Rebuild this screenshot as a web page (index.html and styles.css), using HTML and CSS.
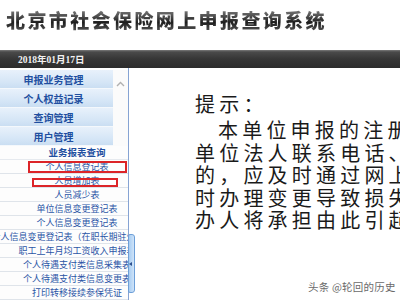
FILE: index.html
```html
<!DOCTYPE html>
<html lang="zh-CN">
<head>
<meta charset="utf-8">
<title>北京市社会保险网上申报查询系统</title>
<link rel="stylesheet" href="styles.css">
</head>
<body>
<div class="page">
  <header class="header">
    <h1 class="title">北京市社会保险网上申报查询系统</h1>
  </header>
  <div class="bar"><span class="date">2018年01月17日</span></div>
  <div class="main">
    <aside class="sidebar">
      <div class="top">
        <ul class="menu">
          <li class="menu-item">申报业务管理</li>
          <li class="menu-item">个人权益记录</li>
          <li class="menu-item">查询管理</li>
          <li class="menu-item">用户管理</li>
        </ul>
        <div class="gutter">
          <svg class="chev" width="9" height="6" viewBox="0 0 9 6"><polyline points="1,5 4.5,1.5 8,5" fill="none" stroke="#b0b0b0" stroke-width="1.4"/></svg>
        </div>
      </div>
      <ul class="sub">
        <li class="sub-item head">业务报表查询</li>
        <li class="sub-item">个人信息登记表</li>
        <li class="sub-item">人员增加表</li>
        <li class="sub-item">人员减少表</li>
        <li class="sub-item">单位信息变更登记表</li>
        <li class="sub-item">个人信息变更登记表</li>
        <li class="sub-item">个人信息变更登记表（在职长期驻外人员）</li>
        <li class="sub-item">职工上年月均工资收入申报表</li>
        <li class="sub-item">个人待遇支付类信息采集表</li>
        <li class="sub-item">个人待遇支付类信息变更表</li>
        <li class="sub-item">打印转移接续参保凭证</li>
      </ul>
      <span class="mark mark-1"></span>
      <span class="mark mark-2"></span>
    </aside>
    <span class="thumb"><span class="thumb-arrow"></span></span>
    <section class="content">
      <p class="tip-title">提示：</p>
      <p class="tip">
        <span class="line indent">本单位申报的注册信息发生变化的</span>
        <span class="line">单位法人联系电话、经办人联系</span>
        <span class="line">的，应及时通过网上申报系统进</span>
        <span class="line">时办理变更导致损失的，由单位</span>
        <span class="line">办人将承担由此引起的一切后果</span>
      </p>
    </section>
  </div>
  <div class="watermark">头条 @轮回的历史</div>
</div>
</body>
</html>
```

FILE: styles.css
```css
* { box-sizing: border-box; margin: 0; padding: 0; }
html, body { width: 400px; height: 300px; overflow: hidden; background: #fff; }
body { font-family: "Noto Sans CJK SC", "Noto Sans", sans-serif; }
ul { list-style: none; }

.page { position: relative; width: 400px; height: 300px; overflow: hidden; }

.header { height: 50px; padding: 8px 0 0 6px; background: #fff; }
.title {
  font-size: 19px;
  font-weight: 900;
  letter-spacing: 2.4px;
  line-height: 24px;
  white-space: nowrap;
  background: linear-gradient(#8a8a8a 0%, #3a3a3a 45%, #1e1e1e 60%, #5a5a5a 100%);
  -webkit-background-clip: text;
  background-clip: text;
  color: transparent;
}

.bar {
  height: 18px;
  display: flex;
  align-items: center;
  padding-left: 18px;
  background: linear-gradient(#7a7a7a 0, #4a4a4a 2px, #363636 50%, #2c2c2c 100%);
}
.date {
  color: #f2f2f2;
  font-family: "Liberation Serif", "Noto Sans CJK SC", serif;
  font-weight: bold;
  font-size: 9.5px;
}

.main { display: flex; height: 232px; }

.sidebar {
  position: relative;
  width: 129px;
  flex: none;
  border-right: 1px solid #86a3d3;
  padding-top: 2px;
  overflow: hidden;
}
.top { display: flex; }
.menu { width: 113px; }
.menu-item {
  height: 19px;
  display: flex;
  align-items: center;
  justify-content: center;
  padding-right: 6px;
  background: linear-gradient(#e8f1fb, #d4e5f6 70%, #cadef2);
  border-bottom: 1px solid #f4f8fc;
  color: #1f4fa0;
  font-size: 10px;
  font-weight: bold;
  white-space: nowrap;
}
.gutter { flex: 1; display: flex; justify-content: center; padding-top: 11px; background: #fbfbfb; }

.sub { background: #fdfdfd; }
.sub-item {
  height: 14px;
  display: flex;
  align-items: center;
  justify-content: center;
  padding-left: 26px;
  border-bottom: 1px solid #dfe4ea;
  color: #2b55a6;
  font-size: 9px;
  line-height: 13px;
  white-space: nowrap;
}
.sub-item.head { font-weight: bold; color: #1f4fa0; font-size: 9.5px; border-bottom-color: #e6eaef; }

.mark { position: absolute; border: 2px solid #dc2428; }
.mark-1 { left: 28px; top: 93px; width: 99px; height: 12px; }
.mark-2 { left: 32px; top: 110px; width: 86px; height: 9px; }

.thumb {
  position: absolute;
  left: 128px;
  top: 234px;
  width: 7px;
  height: 59px;
  background: linear-gradient(90deg, #a9cdf2, #cfe4f9);
  border: 1px solid #6d9fd8;
  border-radius: 2px 3px 3px 2px;
  display: flex;
  align-items: center;
}
.thumb-arrow {
  width: 0; height: 0;
  border-top: 2.5px solid transparent;
  border-bottom: 2.5px solid transparent;
  border-right: 3px solid #2c4f8e;
}

.content {
  flex: 1;
  padding: 25px 0 0 66px;
  overflow: hidden;
  color: #1a1a1a;
  font-size: 20px;
  letter-spacing: 4.2px;
  line-height: 22.5px;
  white-space: nowrap;
}
.tip-title { margin-bottom: 3.5px; }
.tip { display: flex; flex-direction: column; }
.line { display: block; }
.indent { padding-left: 23px; }

.watermark {
  position: absolute;
  left: 308px;
  top: 279px;
  font-size: 10.5px;
  color: #6a6a6a;
  letter-spacing: 0.2px;
  text-shadow: 0 0 2px #fff;
  white-space: nowrap;
}
```
